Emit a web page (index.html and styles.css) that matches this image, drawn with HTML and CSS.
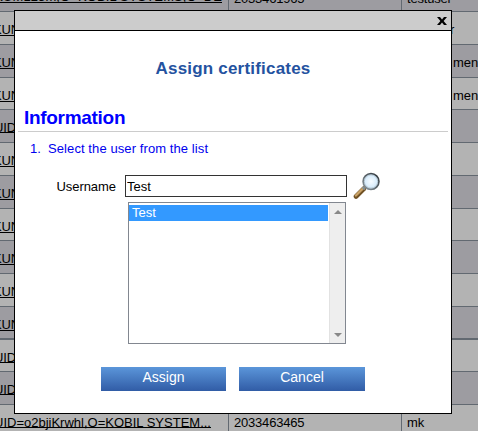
FILE: index.html
```
<!DOCTYPE html>
<html lang="en">
<head>
<meta charset="utf-8">
<title>Assign certificates</title>
<link rel="stylesheet" href="styles.css">
</head>
<body>
<div class="table">
  <div class="row first"><div class="dn"><a class="top">CN=KUM123m,O=KOBIL SYSTEMS,C=DE</a></div><div>2033461965</div><div>testuser</div></div>
  <div class="row"><div class="dn"><a class="kun">KUN</a></div><div></div><div class="end">r</div></div>
  <div class="row"><div class="dn"><a class="kun">KUN</a></div><div></div><div class="end men">men</div></div>
  <div class="row short"><div class="dn"><a class="kun">KUN</a></div><div></div><div class="end men">men</div></div>
  <div class="row"><div class="dn"><a class="uid">UID</a></div><div></div><div></div></div>
  <div class="row"><div class="dn"><a class="kun">KUN</a></div><div></div><div></div></div>
  <div class="row"><div class="dn"><a class="kun">KUN</a></div><div></div><div></div></div>
  <div class="row short"><div class="dn"><a class="kun">KUN</a></div><div></div><div></div></div>
  <div class="row"><div class="dn"><a class="kun">KUN</a></div><div></div><div></div></div>
  <div class="row"><div class="dn"><a class="kun">KUN</a></div><div></div><div></div></div>
  <div class="row thick"><div class="dn"><a class="kun">KUN</a></div><div></div><div></div></div>
  <div class="row short"><div class="dn"><a class="uid">UID</a></div><div></div><div></div></div>
  <div class="row"><div class="dn"><a class="uid">UID</a></div><div></div><div></div></div>
  <div class="row"><div class="dn"><a class="uid full">UID=o2bjiKrwhl,O=KOBIL SYSTEM...</a></div><div>2033463465</div><div>mk</div></div>
</div>
<div class="dialog">
  <div class="titlebar">
    <svg class="close" width="10" height="8" viewBox="0 0 10 8"><path d="M0 0h3l2 2.4L7 0h3L6.6 4 10 8H7L5 5.6 3 8H0l3.4-4z"/></svg>
  </div>
  <h1>Assign certificates</h1>
  <h2>Information</h2>
  <p class="step"><span>1.</span>Select the user from the list</p>
  <div class="field">
    <label for="user">Username</label>
    <input id="user" type="text" value="Test">
    <svg class="lens" width="28" height="28" viewBox="0 0 28 28">
      <defs>
        <radialGradient id="glass"><stop offset="0" stop-color="#f8fcff"/><stop offset="1" stop-color="#cce6fa"/></radialGradient>
        <linearGradient id="rim" x1="0" y1="1" x2="1" y2="0"><stop offset="0" stop-color="#8b979e"/><stop offset="1" stop-color="#2d3338"/></linearGradient>
      </defs>
      <path d="M3 24.5 11 16.5" stroke="#705124" stroke-width="4.6" stroke-linecap="round"/>
      <path d="M2.9 23.5 10.5 15.9" stroke="#c9a267" stroke-width="2.4" stroke-linecap="round"/>
      <path d="M9.5 15 12 17.5" stroke="#81909a" stroke-width="2"/>
      <circle cx="18" cy="9.5" r="7.9" fill="url(#glass)" stroke="url(#rim)" stroke-width="1.7"/>
      <circle cx="18" cy="9.5" r="6.7" fill="none" stroke="#a9bac5" stroke-width=".8"/>
    </svg>
  </div>
  <div class="list">
    <div class="options"><div class="option">Test</div></div>
    <div class="scroll">
      <svg width="8" height="4" viewBox="0 0 8 4"><path d="M0 4 4 0l4 4z"/></svg>
      <svg width="8" height="4" viewBox="0 0 8 4"><path d="M0 0h8L4 4z"/></svg>
    </div>
  </div>
  <div class="buttons"><button>Assign</button><button class="wide">Cancel</button></div>
</div>
</body>
</html>
```
FILE: styles.css
```
* { box-sizing: border-box; }
body {
  margin: 0;
  width: 478px;
  height: 431px;
  overflow: hidden;
  position: relative;
  background: #b3b3b3;
  color: #000;
  font: 13px/16px "Liberation Sans", Arial, sans-serif;
}
.row {
  display: grid;
  grid-template-columns: 229px 173px 76px;
  height: 33px;
  border-bottom: 1px solid #626971;
  background: #b3b3b3;
}
.row:nth-child(odd) { background: #9d9ca1; }
.row.first { height: 12px; }
.row.short { height: 32px; }
.row.thick { border-bottom-width: 2px; }
.row:nth-child(12), .row:nth-child(14) { background: #b3b3b3; }
.row:last-child { height: 27px; border-bottom: 0; }
.row > div {
  padding: 10px 0 0 5px;
  border-right: 1px solid #626971;
  overflow: hidden;
  white-space: nowrap;
  letter-spacing: -0.2px;
}
.row > div:last-child { border-right: 0; }
.row > .dn { padding-left: 0; }
.row.first > div {
  display: flex;
  align-items: flex-end;
  height: 11px;
  padding-top: 0;
  padding-bottom: 4px;
}
.row.first > .dn {
  justify-content: flex-end;
  padding-right: 6px;
  padding-bottom: 8px;
}
.dn a {
  display: inline-block;
  height: 14px;
  border-bottom: 1px solid #000;
}
.dn .top {
  height: 12px;
  line-height: 12px;
  letter-spacing: 0.1px;
}
.kun { margin-left: -7px; }
.dn .uid {
  height: 13px;
  margin-left: -6px;
  letter-spacing: -0.1px;
}
.dn .full { letter-spacing: 0; }
.row > .end { padding-left: 48px; }
.row > .men { padding-left: 51px; letter-spacing: 0; }

.dialog {
  position: absolute;
  left: 14px;
  top: 10px;
  width: 438px;
  height: 404px;
  border: 1px solid #000;
  background: #fff;
}
.titlebar {
  display: flex;
  justify-content: flex-end;
  height: 20px;
  padding: 6px 4px 0 0;
  border-bottom: 1px solid #000;
  background: #ccc;
}
h1 {
  margin: 28px 0 0;
  color: #2452a0;
  font-size: 17px;
  line-height: 20px;
  letter-spacing: 0.2px;
  text-align: center;
}
h2 {
  height: 33px;
  margin: 20px 3px 0;
  padding: 8px 0 0 6px;
  border-bottom: 1px solid #ccc;
  color: #00f;
  font-size: 19px;
  line-height: 22px;
  letter-spacing: -0.3px;
}
.step {
  display: flex;
  margin: 9px 0 0 15px;
  color: #00e;
  letter-spacing: 0.09px;
}
.step span { width: 18px; }
.field {
  display: flex;
  align-items: center;
  margin-top: 15px;
  height: 28px;
}
label {
  width: 101px;
  margin-right: 9px;
  padding-top: 1px;
  letter-spacing: -0.05px;
  text-align: right;
}
input {
  width: 222px;
  height: 22px;
  padding: 1px 1px 0;
  border: 1px solid #333;
  outline: 0;
  background: #fff;
  font: 13px "Liberation Sans", Arial, sans-serif;
}
.lens { margin-left: 6px; }
.list {
  display: flex;
  width: 218px;
  height: 142px;
  margin: 2px 0 0 113px;
  border: 1px solid #828790;
}
.options {
  flex: 1;
  padding-top: 2px;
}
.option {
  height: 16px;
  padding-left: 3px;
  background: #39f;
  color: #fff;
}
.scroll {
  display: flex;
  flex-direction: column;
  justify-content: space-between;
  align-items: center;
  width: 16px;
  margin-left: 1px;
  padding: 7px 0 6px;
  border-left: 1px solid #e2e2e2;
  background: #eee;
  fill: #888;
}
.buttons {
  display: flex;
  gap: 13px;
  margin: 23px 0 0 86px;
}
button {
  width: 125px;
  height: 24px;
  padding: 0 0 5px;
  border: 0;
  background: linear-gradient(#5b96da, #315ca6);
  color: #fff;
  font: 14px "Liberation Sans", Arial, sans-serif;
}
button.wide { width: 126px; }
```
